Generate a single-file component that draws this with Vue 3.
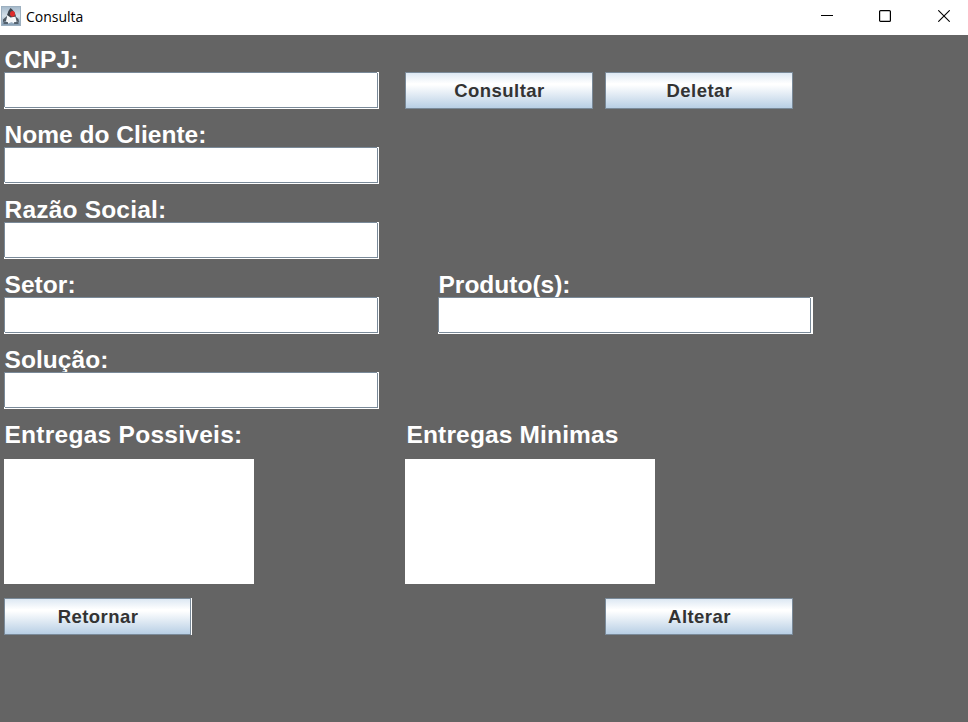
<script setup>
const fields = [
  { id: 'cnpj', label: 'CNPJ:', tracking: 0.1, actions: ['Consultar', 'Deletar'] },
  { id: 'nome', label: 'Nome do Cliente:', tracking: 0.03 },
  { id: 'razao', label: 'Razão Social:', tracking: 0.2 },
  { id: 'setor', label: 'Setor:', tracking: 0.05, side: { id: 'produtos', label: 'Produto(s):', tracking: 0 } },
  { id: 'solucao', label: 'Solução:', tracking: 0.05 }
]
const areas = [
  { id: 'possiveis', label: 'Entregas Possiveis:', tracking: 0.27 },
  { id: 'minimas', label: 'Entregas Minimas', tracking: 0.15 }
]
</script>

<template>
  <div class="window">
    <header class="titlebar">
      <svg class="app-icon" width="20" height="20" viewBox="0 0 20 20">
        <defs>
          <linearGradient id="duke" x1="0" y1="0" x2="0" y2="1">
            <stop offset="0" stop-color="#a3b8ca" />
            <stop offset="0.5" stop-color="#d5e0e9" />
            <stop offset="1" stop-color="#829bb2" />
          </linearGradient>
        </defs>
        <rect x="0.5" y="0.5" width="19" height="19" fill="url(#duke)" stroke="#9db0c0" />
        <path d="M6 10 2 13.500 2 16 6 15Z M14 10 17.500 13 18 16 14 15Z" fill="#4f5963" />
        <path d="M6.500 9 14 9.500 15.500 15 13.500 17.500 10.500 16 7 17.500 5 15Z" fill="#f5f7f9" />
        <path d="M9.500 2Q7.500 4 6 9L9.500 11.500 15 10.500Q14 5.500 9.500 2Z" fill="#3b4149" />
        <ellipse cx="11.500" cy="7.800" rx="2.500" ry="2.900" fill="#df2b2b" />
        <path d="M2.500 17H7M13 17H17.500" stroke="#3e4853" stroke-width="1.300" />
      </svg>
      <span class="title">Consulta</span>
      <div class="controls">
        <svg width="12" height="12" viewBox="0 0 12 12"><path d="M0 5.500H12" stroke="#000" /></svg>
        <svg width="12" height="12" viewBox="0 0 12 12"><rect x="0.600" y="0.600" width="10.800" height="10.800" rx="1" fill="none" stroke="#000" stroke-width="1.200" /></svg>
        <svg width="12" height="12" viewBox="0 0 12 12"><path d="M0.300 0.300 11.700 11.700M11.700 0.300 0.300 11.700" stroke="#000" stroke-width="1.100" /></svg>
      </div>
    </header>

    <main class="form">
      <div v-for="f in fields" :key="f.id" class="row">
        <div class="cell">
          <label class="label" :for="f.id" :style="{ letterSpacing: f.tracking + 'px' }">{{ f.label }}</label>
          <div class="field"><input :id="f.id" type="text" /></div>
        </div>
        <div v-if="f.actions" class="actions">
          <button v-for="a in f.actions" :key="a" class="btn" type="button">{{ a }}</button>
        </div>
        <div v-if="f.side" class="cell side">
          <label class="label" :for="f.side.id" :style="{ letterSpacing: f.side.tracking + 'px' }">{{ f.side.label }}</label>
          <div class="field"><input :id="f.side.id" type="text" /></div>
        </div>
      </div>

      <div class="areas">
        <div v-for="a in areas" :key="a.id" class="area-cell">
          <label class="label" :for="a.id" :style="{ letterSpacing: a.tracking + 'px' }">{{ a.label }}</label>
          <textarea :id="a.id" class="area"></textarea>
        </div>
      </div>

      <footer class="footer">
        <div class="return"><button class="btn" type="button">Retornar</button></div>
        <button class="btn" type="button">Alterar</button>
      </footer>
    </main>
  </div>
</template>

<style>
body {
  margin: 0;
  overflow: hidden;
}
</style>

<style scoped>
.window {
  display: flex;
  flex-direction: column;
  width: 968px;
  height: 722px;
  background: #646464;
  font-family: "Liberation Sans", Arial, sans-serif;
}
.titlebar {
  display: flex;
  align-items: center;
  box-sizing: border-box;
  height: 35px;
  padding: 0 18px 3px 1px;
  background: #fff;
}
.title {
  margin-left: 5px;
  padding-top: 1px;
  font-family: "Open Sans", "Noto Sans", sans-serif;
  font-size: 14px;
  line-height: 20px;
  color: #000;
}
.controls {
  display: flex;
  gap: 46px;
  margin-left: auto;
}
.controls svg {
  display: block;
}
.controls svg:not(:last-child) {
  margin-left: -1px;
  margin-right: 1px;
}
.form {
  display: flex;
  flex-direction: column;
  gap: 10px;
  padding: 9px 0 0 4px;
}
.row {
  display: flex;
  align-items: flex-end;
  height: 65px;
}
.cell {
  width: 375px;
}
.side {
  margin-left: 59px;
}
.label {
  display: block;
  height: 28px;
  padding-left: 0.5px;
  font-size: 24.5px;
  font-weight: bold;
  line-height: 32px;
  white-space: nowrap;
  color: #fff;
}
.field {
  box-sizing: border-box;
  height: 37px;
  padding: 0 1px 1px 0;
  background: #fff;
}
.side .field {
  padding-right: 2px;
}
.field input {
  display: block;
  box-sizing: border-box;
  width: 100%;
  height: 36px;
  margin: 0;
  padding: 0 6px;
  border: 1px solid #7a8a99;
  border-radius: 0;
  outline: none;
  background: #fff;
  font-size: 18px;
  clip-path: polygon(0 0, calc(100% - 1px) 0, calc(100% - 1px) 1px, 100% 1px, 100% 100%, 1px 100%, 1px calc(100% - 1px), 0 calc(100% - 1px));
}
.actions {
  display: flex;
  gap: 12px;
  margin-left: 26px;
}
.btn {
  box-sizing: border-box;
  width: 188px;
  height: 37px;
  margin: 0;
  padding: 1px 0 0 1px;
  border: 1px solid #7a8a99;
  border-radius: 0;
  background: linear-gradient(#dde8f3 0%, #fff 30%, #fff 34%, #b8cfe5 100%);
  font-family: inherit;
  font-size: 18.5px;
  font-weight: bold;
  letter-spacing: 0.45px;
  color: #333;
}
.areas {
  display: flex;
}
.area-cell {
  width: 401px;
}
.area-cell + .area-cell .label {
  padding-left: 1.5px;
}
.area {
  display: block;
  box-sizing: border-box;
  width: 250px;
  height: 125px;
  margin: 12px 0 0;
  padding: 4px;
  border: 0;
  outline: none;
  resize: none;
  background: #fff;
}
.footer {
  display: flex;
  justify-content: space-between;
  width: 789px;
  margin-top: 4px;
}
.return {
  display: flex;
  padding-right: 1px;
  background: #fff;
}
.return .btn {
  width: 187px;
}
</style>
